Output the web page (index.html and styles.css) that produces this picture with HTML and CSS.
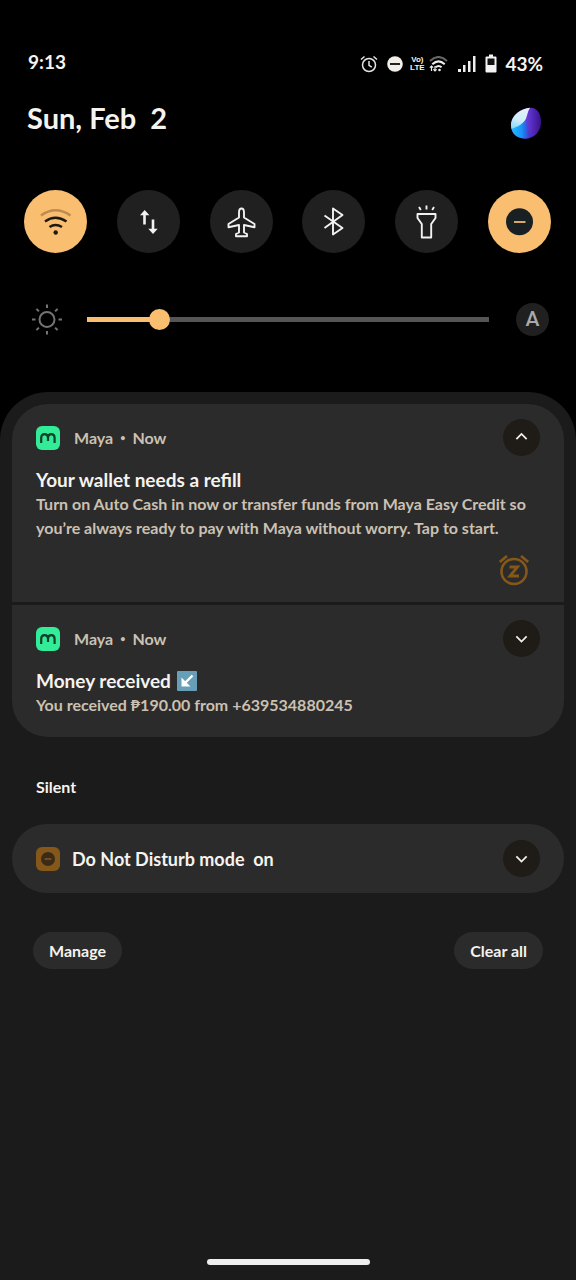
FILE: index.html
```html
<!DOCTYPE html>
<html lang="en">
<head>
<meta charset="utf-8">
<meta name="viewport" content="width=device-width, initial-scale=1">
<title>Notifications</title>
<link rel="stylesheet" href="styles.css">
</head>
<body>
<svg class="defs" aria-hidden="true">
  <symbol id="maya" viewBox="0 0 24 24">
    <rect width="24" height="24" rx="6" fill="#32ec98"/>
    <path d="M5.2 17v-5.200q0-3.600 3.400-3.600 3.400 0 3.400 3.600V15M12 11.800Q12 8.200 15.200 8.200q3.400 0 3.400 3.600V17" fill="none" stroke="#123f2b" stroke-width="2.200"/>
  </symbol>
  <symbol id="down" viewBox="0 0 36 36">
    <path d="M13 16l5 5 5-5" fill="none" stroke="#f4efe8" stroke-width="1.700"/>
  </symbol>
  <symbol id="up" viewBox="0 0 36 36">
    <path d="M13 19.500l5-5 5 5" fill="none" stroke="#f4efe8" stroke-width="1.700"/>
  </symbol>
</svg>
<div class="shade">
  <header class="top">
    <div class="status">
      <time class="clock">9:13</time>
      <div class="signals">
        <svg class="alarm" width="18" height="18" viewBox="0 0 18 18" fill="none" stroke="#e4e4e4" stroke-width="1.500"><circle cx="9" cy="10" r="6.500"/><path d="M9 6v4.300l2.800 1.900M1 4.500L4.500 1.500M17 4.500L13.500 1.500"/></svg>
        <svg class="dnd" width="16" height="16" viewBox="0 0 16 16"><circle cx="8" cy="8" r="7.800" fill="#f3eee8"/><path d="M3 8h10" stroke="#222" stroke-width="2"/></svg>
        <span class="volte"><span>Vo)</span><span>LTE</span></span>
        <svg class="wifi" width="19" height="16" viewBox="0 0 19 16" fill="none" stroke="#eee" stroke-width="2"><path d="M1 5q8.500-8 17 0" stroke="#666"/><path d="M3.300 8.200q6.200-5.700 12.400 0M6.600 11.300q3-2.600 6 0"/><circle cx="10.500" cy="14" r="1.300" fill="#eee" stroke="none"/><path d="M2.500 10v5M.8 11.700l1.700-1.700 1.700 1.700M6 10v5M4.300 13.400L6 15l1.700-1.600" stroke-width="1.200"/></svg>
        <svg class="bars" width="18" height="16" viewBox="0 0 18 16" fill="#eee"><path d="M0 13h3v3H0zM5 9h2.500v7H5zM10 5h2.500v11H10zM15 0h2.500v16H15z"/></svg>
        <svg class="battery" width="12" height="19" viewBox="0 0 12 19"><path d="M4 .5h4v2h2.500q1 0 1 1v14q0 1-1 1h-9q-1 0-1-1v-14q0-1 1-1H4z" fill="#f3f3f3"/><path d="M2.500 4.500h7V11h-7z" fill="#111"/></svg>
        <span class="percent">43%</span>
      </div>
    </div>
    <div class="date-row">
      <h1 class="date">Sun, Feb&nbsp; 2</h1>
      <button class="orb" aria-label="Control center">
        <svg width="32" height="32" viewBox="0 0 32 32">
          <defs>
            <linearGradient id="violet" x1="0" y1="0" x2="1" y2="0"><stop offset=".4" stop-color="#7347ee"/><stop offset="1" stop-color="#39108c"/></linearGradient>
            <linearGradient id="ice" x1=".7" y1="0" x2=".4" y2="1"><stop offset="0" stop-color="#e9eef9"/><stop offset=".6" stop-color="#cdeefa"/><stop offset="1" stop-color="#8fdcf9"/></linearGradient>
            <linearGradient id="azure" x1="0" y1="0" x2="1" y2="0"><stop offset="0" stop-color="#24bdfa"/><stop offset=".5" stop-color="#1696fb"/><stop offset="1" stop-color="#4a25c6"/></linearGradient>
          </defs>
          <path d="M20 .8C27 .3 31.500 7 31 16c-.5 9-7 15.500-15.500 15.500C6 31.500 1 26 1 18.500 1 8 12 1.200 20 .8z" fill="url(#violet)"/>
          <path d="M1.500 21c5-.5 8.500-3.500 13.500-9l6 18.300q-3 1.200-5.500 1.200C8 31.500 3 28 1.500 21z" fill="url(#azure)"/>
          <path d="M20 .8C12 1.200 1 8 1 18.500q0 1.800.5 3.200C8 20 14 16 16 11.500c1.500-3.500 1.500-7 4-10.700z" fill="url(#ice)"/>
        </svg>
      </button>
    </div>
    <div class="tiles">
      <button class="tile on" aria-label="Wi-Fi" aria-pressed="true">
        <svg viewBox="0 0 63 63" fill="none" stroke="#1d1a16" stroke-width="2.500"><path d="M17 25.500q14.500-10.500 29.500 0" stroke="#bd8b4d"/><path d="M21 31.500q10.500-7.500 21.500 0M25.500 37q6-4 12.500 0"/><circle cx="31.700" cy="42.500" r="2.200" fill="#1d1a16" stroke="none"/></svg>
      </button>
      <button class="tile" aria-label="Mobile data" aria-pressed="false">
        <svg viewBox="0 0 63 63"><path d="M27.500 34.500V24M36 29.500V40" stroke="#f2f2f2" stroke-width="2.600"/><path d="M23 25.300L27.700 20l4.700 5.300zM31.300 38.700L36 44l4.700-5.300z" fill="#f2f2f2"/></svg>
      </button>
      <button class="tile" aria-label="Airplane mode" aria-pressed="false">
        <svg viewBox="0 0 63 63" fill="none" stroke="#f2f2f2" stroke-width="1.900" stroke-linejoin="round"><path d="M31.500 18.500q-2.500 0-2.500 4v5L18.500 34v3.300L29 35v7.500l-3 1.500v2.300h11V44l-3-1.500V35l10.500 2.300V34L34 27.500v-5q0-4-2.500-4z"/></svg>
      </button>
      <button class="tile" aria-label="Bluetooth" aria-pressed="false">
        <svg viewBox="0 0 63 63" fill="none" stroke="#f2f2f2" stroke-width="1.900" stroke-linejoin="round"><path d="M22.500 25.500L40.500 38l-9.500 6.500v-26l9.500 6.500L22.500 38"/></svg>
      </button>
      <button class="tile" aria-label="Flashlight" aria-pressed="false">
        <svg viewBox="0 0 63 63" fill="none" stroke="#f2f2f2" stroke-width="1.900" stroke-linejoin="round"><path d="M22.500 24h18v4l-4.300 6v13.500h-9.400V34l-4.300-6zM31.500 15.500v4M24 17l1.800 3M39 17l-1.800 3"/></svg>
      </button>
      <button class="tile on" aria-label="Do Not Disturb" aria-pressed="true">
        <svg viewBox="0 0 63 63"><circle cx="31.500" cy="31.700" r="13.500" fill="#182023"/><path d="M26 32h11.500" stroke="#d9a866" stroke-width="2"/></svg>
      </button>
    </div>
    <div class="brightness">
      <svg class="sun" width="32" height="32" viewBox="0 0 32 32" fill="none" stroke="#747474" stroke-width="2"><circle cx="16" cy="15.500" r="7.500"/><path d="M16 .5V4M16 27v3.500M1 15.500h3.500M27.500 15.500H31M5.400 4.900l2.500 2.500M24.100 23.600l2.500 2.500M5.400 26.100l2.500-2.500M24.100 7.400l2.500-2.500"/></svg>
      <input class="slider" type="range" min="0" max="1000" value="164" aria-label="Brightness">
      <button class="auto" aria-label="Automatic brightness">A</button>
    </div>
  </header>
  <main class="panel">
    <section class="group">
      <article class="note note-open">
        <div class="note-head">
          <svg class="app"><use href="#maya"/></svg>
          <span class="source">Maya <span class="dot">•</span> Now</span>
          <button class="toggle" aria-label="Collapse"><svg><use href="#up"/></svg></button>
        </div>
        <h2 class="title">Your wallet needs a refill</h2>
        <p class="text">Turn on Auto Cash in now or transfer funds from Maya Easy Credit so you’re always ready to pay with Maya without worry. Tap to start.</p>
        <button class="snooze" aria-label="Snooze">
          <svg width="32" height="32" viewBox="0 0 32 32" fill="none" stroke="#85581a"><circle cx="16" cy="17.500" r="12.500" stroke-width="2.600"/><path d="M1.800 8L9 2M30.200 8L23 2" stroke-width="2.800"/><path d="M11.500 13h8l-7.500 9h9" stroke-width="2.800"/></svg>
        </button>
      </article>
      <article class="note">
        <div class="note-head">
          <svg class="app"><use href="#maya"/></svg>
          <span class="source">Maya <span class="dot">•</span> Now</span>
          <button class="toggle" aria-label="Expand"><svg><use href="#down"/></svg></button>
        </div>
        <h2 class="title">Money received
          <svg width="20" height="20" viewBox="0 0 20 20" role="img" aria-label="down-left arrow"><rect width="20" height="20" rx="1" fill="#689fb8"/><path d="M15.500 4.500L8 12" stroke="#fff" stroke-width="2.400"/><path d="M4.500 6.500v9h9z" fill="#fff"/></svg>
        </h2>
        <p class="text">You received ₱190.00 from +639534880245</p>
      </article>
    </section>
    <h2 class="section-name">Silent</h2>
    <article class="silent">
      <svg class="app" viewBox="0 0 24 24"><rect width="24" height="24" rx="6" fill="#85581a"/><circle cx="12" cy="12" r="7" fill="#3a2b19"/><path d="M8.500 12h7" stroke="#85581a" stroke-width="1.500"/></svg>
      <h3 class="silent-title">Do Not Disturb mode&nbsp; on</h3>
      <button class="toggle" aria-label="Expand"><svg><use href="#down"/></svg></button>
    </article>
    <div class="actions">
      <button class="pill">Manage</button>
      <button class="pill">Clear all</button>
    </div>
    <div class="home"></div>
  </main>
</div>
</body>
</html>
```
FILE: styles.css
```css
* { box-sizing: border-box; }
body {
  margin: 0;
  background: #000;
  color: #f5f3f0;
  font-family: Lato, "Open Sans", "Liberation Sans", sans-serif;
  font-weight: 700;
}
h1, h2, h3, p { margin: 0; font-weight: 700; }
button { padding: 0; border: 0; background: none; color: inherit; font: inherit; cursor: pointer; }
svg { display: block; flex: none; }
.defs { position: absolute; width: 0; height: 0; }
.shade { min-height: 100vh; display: flex; flex-direction: column; }

.top { padding: 47px 25px 56px 24px; }
.status { display: flex; justify-content: space-between; align-items: center; height: 30px; padding: 0 8px 0 4px; }
.clock { font-size: 19px; line-height: 28px; }
.signals { display: flex; align-items: center; padding-top: 3px; }
.dnd { margin-left: 9px; }
.volte { display: flex; flex-direction: column; width: 16px; margin-left: 6px; font-family: "Liberation Sans", sans-serif; font-size: 8px; line-height: 8px; text-align: center; }
.wifi { margin-left: 4px; }
.bars { margin-left: 10px; }
.battery { margin-left: 9px; }
.percent { margin-left: 8px; font-size: 19px; line-height: 24px; }

.date-row { display: flex; justify-content: space-between; align-items: center; margin-top: 20px; padding: 0 9px 0 3px; }
.date { font-size: 29px; line-height: 40px; }
.orb { margin-top: 10px; }

.tiles { display: flex; justify-content: space-between; margin-top: 51px; }
.tile { width: 63px; height: 63px; border-radius: 50%; background: #202020; }
.tile.on { background: #f9be70; }
.tile svg { width: 63px; height: 63px; }

.brightness { display: flex; align-items: center; margin-top: 50px; padding: 0 2px 0 7px; }
.slider { flex: 1; min-width: 0; height: 21px; margin: 0 27px 0 24px; appearance: none; background: linear-gradient(90deg, #f9be70 18%, #555 18%) center / 100% 5px no-repeat; }
.slider::-webkit-slider-thumb { appearance: none; width: 21px; height: 21px; border-radius: 50%; background: #f9be70; }
.auto { width: 33px; height: 33px; border-radius: 50%; background: #202020; color: #aaa; font-family: Roboto, sans-serif; font-size: 21px; font-weight: 500; line-height: 33px; }

.panel { flex: 1; display: flex; flex-direction: column; padding: 12px 12px 15px; border-radius: 48px 48px 0 0; background: #1b1b1b; }
.group { display: flex; flex-direction: column; gap: 3px; border-radius: 36px; overflow: hidden; }
.note { padding: 15px 24px 20px; background: #2b2b2b; }
.note-open { padding-bottom: 16px; }
.note-head { display: flex; align-items: center; }
.app { width: 24px; height: 24px; }
.source { display: flex; gap: 7px; margin-left: 14px; color: #cbc1b3; font-size: 16px; line-height: 24px; }
.dot { font-size: 9px; }
.toggle { width: 37px; height: 37px; margin-left: auto; border-radius: 50%; background: #1f1b17; }
.toggle svg { width: 37px; height: 37px; }
.title { display: flex; align-items: center; gap: 6px; margin-top: 12px; font-size: 19px; line-height: 24px; }
.text { color: #cbc1b3; font-size: 16px; line-height: 24px; }
.snooze { display: block; margin: 14px 10px 0 auto; }

.section-name { margin-top: 38px; padding: 0 24px; font-size: 16px; line-height: 24px; }
.silent { display: flex; align-items: center; margin-top: 25px; padding: 16px 24px; border-radius: 36px; background: #2b2b2b; }
.silent-title { margin-left: 12px; font-size: 18px; line-height: 24px; }
.actions { display: flex; justify-content: space-between; margin-top: 39px; padding: 0 21px; }
.pill { height: 37px; padding: 0 16px; border-radius: 19px; background: #2b2b2b; font-size: 16px; }
.home { align-self: center; width: 163px; height: 6px; margin-top: auto; border-radius: 3px; background: #eee; }
```
